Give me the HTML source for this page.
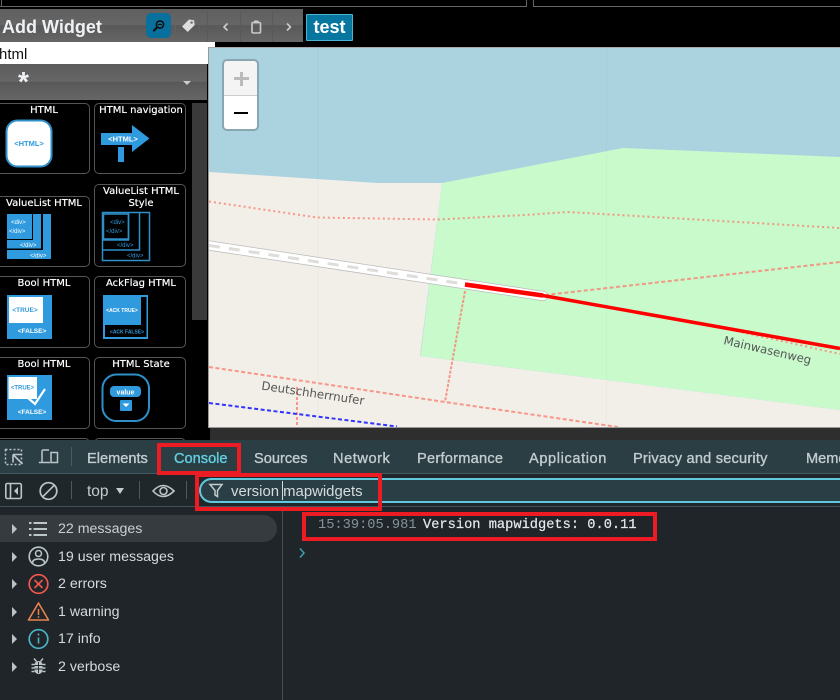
<!DOCTYPE html>
<html><head><meta charset="utf-8">
<style>
html,body{margin:0;padding:0;width:840px;height:700px;overflow:hidden;background:#000}
body{position:relative;font-family:"Liberation Sans",sans-serif}
.a{position:absolute}
.t{position:absolute;white-space:nowrap}
.tile{position:absolute;border:1px solid #555;border-radius:5px;box-sizing:border-box;background:#000}
.tl{position:absolute;color:#fff;font:10px/12px "DejaVu Sans",sans-serif;text-align:center;white-space:nowrap;text-shadow:0 0 .5px #fff}
.tab{position:absolute;top:451px;font-size:14.6px;line-height:17px;color:#c3cccf;white-space:nowrap;-webkit-text-stroke:.35px #c3cccf}
.row{position:absolute;left:58px;font-size:14.2px;line-height:17px;color:#d6dbdd;white-space:nowrap}
.arr{position:absolute;left:12px;width:0;height:0;border-left:5px solid #bcc3c6;border-top:5px solid transparent;border-bottom:5px solid transparent}
.red{position:absolute;border:4px solid #ed1c24;box-sizing:border-box}
</style></head><body>

<!-- top strip -->
<div class="a" style="left:0;top:6px;width:527px;height:1px;background:#666"></div>
<div class="a" style="left:533px;top:6px;width:307px;height:1px;background:#666"></div>
<div class="a" style="left:1px;top:0;width:1px;height:6px;background:#666"></div>
<div class="a" style="left:526px;top:0;width:1px;height:6px;background:#666"></div>
<div class="a" style="left:533px;top:0;width:1px;height:6px;background:#666"></div>

<!-- toolbar -->
<div class="a" style="left:0;top:9px;width:303px;height:33px;background:linear-gradient(#5f5f5f,#666 48%,#585858 50%,#666)"></div>
<div class="t" style="left:2px;top:16px;font:bold 18px/22px 'Liberation Sans',sans-serif;color:#eef2f5">Add Widget</div>
<div class="a" style="left:146px;top:13px;width:25px;height:25px;background:#08709c;border-radius:5px"></div>
<svg class="a" style="left:146px;top:13px" width="25" height="25" viewBox="0 0 25 25"><circle cx="14" cy="11.500" r="3.600" fill="none" stroke="#111" stroke-width="1.600"/><path d="M12 11.500h4" stroke="#111" stroke-width="1.100"/><path d="M11 14.500l-3 3" stroke="#111" stroke-width="2.200" stroke-linecap="round"/></svg>
<div class="a" style="left:175px;top:13px;width:25px;height:25px;border:1px solid #626262;box-sizing:border-box;border-radius:5px"></div>
<svg class="a" style="left:175px;top:13px" width="25" height="25" viewBox="0 0 25 25"><path d="M7 13.500l7-7 5 .8.700 4.700-7 7z" fill="#ddd"/><circle cx="16.600" cy="9.600" r="1.200" fill="#666"/></svg>
<div class="a" style="left:207px;top:10px;width:1px;height:32px;background:#5a5a5a"></div>
<div class="a" style="left:240px;top:10px;width:1px;height:32px;background:#5a5a5a"></div>
<div class="a" style="left:272px;top:10px;width:1px;height:32px;background:#5a5a5a"></div>
<svg class="a" style="left:215px;top:15px" width="85" height="24" viewBox="0 0 85 24"><path d="M12.500 8.500l-3.500 3.500 3.500 3.500" fill="none" stroke="#ccc" stroke-width="1.600"/><path d="M72 8.500l3.500 3.500-3.500 3.500" fill="none" stroke="#ccc" stroke-width="1.600"/><rect x="37" y="7.500" width="8.500" height="10.500" rx="1.200" fill="none" stroke="#ccc" stroke-width="1.600"/><rect x="39" y="5.500" width="4.500" height="2.800" fill="#ccc"/></svg>

<!-- test button -->
<div class="a" style="left:306px;top:14px;width:47px;height:27px;box-sizing:border-box;background:#07779f;border:1px solid #4fb3d4;border-radius:1px;color:#fff;font:bold 18px/24px 'Liberation Sans',sans-serif;text-align:center">test</div>

<!-- search input -->
<div class="a" style="left:0;top:42px;width:215px;height:22px;background:#fff"></div>
<div class="t" style="left:-1px;top:46px;font-size:15px;line-height:18px;color:#111">html</div>

<!-- dropdown -->
<div class="a" style="left:0;top:64px;width:207px;height:36px;background:linear-gradient(#5c5c5c,#666 48%,#585858 50%,#666)"></div>
<div class="t" style="left:18px;top:68px;font:bold 28px/28px 'Liberation Sans',sans-serif;color:#eef2f5">*</div>
<div class="a" style="left:183px;top:81px;width:0;height:0;border-top:4px solid #ccc;border-left:4.500px solid transparent;border-right:4.500px solid transparent"></div>

<!-- scrollbar -->
<div class="a" style="left:192px;top:103px;width:15px;height:217px;background:#3a3a3a"></div>

<!-- tiles -->
<div class="tile" style="left:-10px;top:103px;width:100px;height:71px"></div>
<div class="tile" style="left:94px;top:103px;width:92px;height:71px"></div>
<div class="tile" style="left:-10px;top:196px;width:100px;height:71px"></div>
<div class="tile" style="left:94px;top:184px;width:92px;height:83px"></div>
<div class="tile" style="left:-10px;top:276px;width:100px;height:72px"></div>
<div class="tile" style="left:94px;top:276px;width:92px;height:72px"></div>
<div class="tile" style="left:-10px;top:357px;width:100px;height:72px"></div>
<div class="tile" style="left:94px;top:357px;width:92px;height:72px"></div>
<div class="tile" style="left:-10px;top:438px;width:100px;height:20px"></div>
<div class="tile" style="left:94px;top:438px;width:92px;height:20px"></div>

<div class="tl" style="left:0;width:88px;top:105px">HTML</div>
<div class="tl" style="left:95px;width:92px;top:105px">HTML navigation</div>
<div class="tl" style="left:0;width:88px;top:198px">ValueList HTML</div>
<div class="tl" style="left:95px;width:92px;top:186px">ValueList HTML</div>
<div class="tl" style="left:95px;width:92px;top:198px">Style</div>
<div class="tl" style="left:0;width:88px;top:278px">Bool HTML</div>
<div class="tl" style="left:95px;width:92px;top:278px">AckFlag HTML</div>
<div class="tl" style="left:0;width:88px;top:359px">Bool HTML</div>
<div class="tl" style="left:95px;width:92px;top:359px">HTML State</div>

<svg class="a" style="left:0;top:100px" width="190" height="340" viewBox="0 100 190 340" font-family="'Liberation Sans',sans-serif" font-weight="bold">
  <!-- HTML -->
  <rect x="6.500" y="120.500" width="45" height="46" rx="11" fill="#fff" stroke="#2f8fc9" stroke-width="2"/>
  <text x="29" y="146" text-anchor="middle" font-size="7.500" fill="#2f9ade">&lt;HTML&gt;</text>
  <!-- nav -->
  <path d="M101 133H132V125L149.500 138.500 132 152V145H101z" fill="#2f9ade"/>
  <rect x="118" y="147" width="6" height="15" fill="#2f9ade"/>
  <text x="123" y="141.500" text-anchor="middle" font-size="7.500" fill="#fff">&lt;HTML&gt;</text>
  <!-- valuelist -->
  <rect x="7" y="214" width="25" height="25" fill="#2f9ade"/>
  <rect x="33" y="214" width="8" height="26" fill="#2f9ade"/>
  <rect x="7" y="240" width="34" height="8.500" fill="#2f9ade"/>
  <rect x="43" y="214" width="8" height="36" fill="#2f9ade"/>
  <rect x="7" y="250" width="44" height="9" fill="#2f9ade"/>
  <g font-size="6" font-weight="normal" fill="#fff">
    <text x="11" y="224">&lt;div&gt;</text><text x="9" y="233">&lt;/div&gt;</text>
    <text x="20" y="247">&lt;/div&gt;</text><text x="30" y="257.500">&lt;/div&gt;</text>
  </g>
  <!-- valuelist style -->
  <rect x="102.500" y="212.500" width="47" height="48" fill="none" stroke="#2f8fc9" stroke-width="1.500"/>
  <rect x="103.500" y="214" width="25" height="25" fill="none" stroke="#2f8fc9" stroke-width="1.500"/>
  <path d="M128.500 213V240H103M139.500 213V250H103" fill="none" stroke="#2f8fc9" stroke-width="1.500"/>
  <g font-size="6" font-weight="normal" fill="#2f9ade">
    <text x="110" y="224">&lt;div&gt;</text><text x="106" y="233">&lt;/div&gt;</text>
    <text x="117" y="247">&lt;/div&gt;</text><text x="127" y="257.500">&lt;/div&gt;</text>
  </g>
  <!-- bool -->
  <rect x="7" y="295" width="45" height="44" fill="#2f9ade"/>
  <rect x="9" y="297" width="34" height="26" fill="#fff"/>
  <text x="25" y="312" text-anchor="middle" font-size="6.500" fill="#2f9ade">&lt;TRUE&gt;</text>
  <text x="32" y="333" text-anchor="middle" font-size="6.500" fill="#fff">&lt;FALSE&gt;</text>
  <!-- ackflag -->
  <rect x="103" y="295" width="45" height="44" fill="#2f9ade"/>
  <rect x="141" y="297" width="5.500" height="28" fill="#000"/>
  <rect x="105" y="325" width="41.500" height="12" fill="#000"/>
  <text x="122" y="312" text-anchor="middle" font-size="5" fill="#fff">&lt;ACK TRUE&gt;</text>
  <text x="127" y="333.500" text-anchor="middle" font-size="5" fill="#2f9ade">&lt;ACK FALSE&gt;</text>
  <!-- bool 2 -->
  <rect x="7" y="375" width="45" height="45" fill="#2f9ade"/>
  <rect x="8.500" y="377" width="28.500" height="22" fill="#fff"/>
  <text x="22.500" y="389.500" text-anchor="middle" font-size="6" fill="#2f9ade">&lt;TRUE&gt;</text>
  <path d="M28 398l7 6 10-15" fill="none" stroke="#fff" stroke-width="2.200"/>
  <text x="32" y="414" text-anchor="middle" font-size="6.500" fill="#fff">&lt;FALSE&gt;</text>
  <!-- state -->
  <rect x="102.500" y="374.500" width="46.500" height="46.500" rx="14" fill="none" stroke="#2f8fc9" stroke-width="2"/>
  <rect x="110" y="386" width="31" height="11" rx="4" fill="#2f9ade"/>
  <text x="125.500" y="394.500" text-anchor="middle" font-size="7" fill="#fff">value</text>
  <rect x="120" y="400" width="12" height="11" rx="1" fill="#2f9ade"/>
  <path d="M122.500 403.500h7l-3.500 3.500z" fill="#fff"/>
</svg>

<!-- map -->
<svg class="a" style="left:209px;top:47px;background:#aad3df" width="631" height="381" viewBox="209 47 631 381">
  <rect x="209" y="47" width="631" height="381" fill="#aad3df"/>
  <path d="M209 172L317 179 377 183 442 183 420 356 840 410V428H209z" fill="#f2efe9"/>
  <path d="M442 183L623 148 840 157V410L420.500 356z" fill="#c8facc"/>
  <path d="M318 47V428M606.500 47V428" stroke="#000" stroke-opacity=".025" stroke-width="1"/>
  <g style="filter:blur(.35px)">
  <!-- paths -->
  <g fill="none" stroke="#fa8072" stroke-opacity=".8">
    <path d="M209 201.500L317 217.500 437 219.500 525 215 568 212 840 228" stroke-width="2" stroke-dasharray="2 3"/>
    <path d="M545 295L840 262" stroke-width="2" stroke-dasharray="4 2.500"/>
    <path d="M732 330L840 354" stroke-width="2" stroke-dasharray="2 3"/>
    <path d="M209 367L445 402 525 413.500 618 427" stroke-width="2" stroke-dasharray="4 2.500"/>
    <path d="M465 291L453 357 445 402" stroke-width="2" stroke-dasharray="3 1.500"/>
    <path d="M297 387V428" stroke-width="2" stroke-dasharray="3 2"/>
  </g>
  <path d="M209 403L397 426.500" fill="none" stroke="#3333ff" stroke-width="2" stroke-dasharray="4 2.500"/>
  <!-- road -->
  <path d="M209 245.500L543 296" fill="none" stroke="#bbb" stroke-width="10" stroke-linecap="round"/>
  <path d="M209 245.500L543 296" fill="none" stroke="#fff" stroke-width="8.500" stroke-linecap="round"/>
  <path d="M209 245.500L465 284.200" fill="none" stroke="#dfddd9" stroke-width="3" stroke-dasharray="11 9"/>
  <path d="M465 284.500L543 295.500" fill="none" stroke="#f00" stroke-width="4.500"/>
  <path d="M540 295L840 348.500" fill="none" stroke="#f00" stroke-width="3.500"/>
  <text transform="translate(261,389.500) rotate(8.500)" font-family="'DejaVu Sans',sans-serif" font-size="11.800" fill="#555">Deutschherrnufer</text>
  <text transform="translate(723,344) rotate(13)" font-family="'DejaVu Sans',sans-serif" font-size="11.700" fill="#555">Mainwasenweg</text>
  </g>
</svg>
<div class="a" style="left:209px;top:47px;width:631px;height:1px;background:#aaa"></div>
<div class="a" style="left:208px;top:47px;width:1px;height:381px;background:#999"></div>
<div class="a" style="left:209px;top:427px;width:631px;height:1px;background:#999"></div>
<div class="a" style="left:209px;top:428px;width:631px;height:12px;background:#2e2e2e"></div>
<div class="a" style="left:208px;top:428px;width:2px;height:12px;background:#000"></div>

<!-- zoom -->
<div class="a" style="left:222px;top:59px;width:37px;height:72px;background:#8aa6b0;border-radius:5px"></div>
<div class="a" style="left:224px;top:61px;width:33px;height:34px;background:#f4f4f4;border-radius:3px 3px 0 0"></div>
<div class="a" style="left:224px;top:95px;width:33px;height:1px;background:#ccc"></div>
<div class="a" style="left:224px;top:96px;width:33px;height:33px;background:#fff;border-radius:0 0 3px 3px"></div>
<div class="a" style="left:233.500px;top:77px;width:15px;height:2.500px;background:#bbb"></div>
<div class="a" style="left:239.500px;top:71.500px;width:3px;height:14px;background:#bbb"></div>
<div class="a" style="left:233.500px;top:112px;width:14.500px;height:2px;background:#000"></div>

<!-- devtools -->
<div class="a" style="left:0;top:440px;width:840px;height:33px;background:#2a3e44"></div>
<div class="a" style="left:0;top:473px;width:840px;height:1px;background:#445a62"></div>
<div class="a" style="left:0;top:474px;width:840px;height:32px;background:#20272b"></div>
<div class="a" style="left:0;top:506px;width:840px;height:1px;background:#3f5159"></div>
<div class="a" style="left:0;top:507px;width:840px;height:193px;background:#202529"></div>
<div class="a" style="left:282px;top:507px;width:1px;height:193px;background:#3f5159"></div>

<svg class="a" style="left:0;top:440px" width="80" height="33" viewBox="0 0 80 33" fill="none" stroke="#bcc5c8">
  <rect x="5.500" y="9.500" width="16" height="15" stroke-width="1.500" stroke-dasharray="2 2"/>
  <path d="M13 14.500h8.500M13 14.500v8M13.500 15l9 9" stroke-width="1.600" stroke="#bcc5c8"/>
  <path d="M49 10H43.500Q42 10 42 11.500V22M38.800 22.500H50" stroke-width="1.500"/>
  <rect x="51" y="12.500" width="6.500" height="10" stroke-width="1.500"/>
</svg>
<div class="a" style="left:71px;top:447px;width:1px;height:19px;background:#4a5c63"></div>
<div class="tab" style="left:87px">Elements</div>
<div class="tab" style="left:174px;color:#63cfe2;-webkit-text-stroke:.35px #63cfe2">Console</div>
<div class="tab" style="left:254px">Sources</div>
<div class="tab" style="left:333px;letter-spacing:.55px">Network</div>
<div class="tab" style="left:417px;letter-spacing:.25px">Performance</div>
<div class="tab" style="left:529px;letter-spacing:.6px">Application</div>
<div class="tab" style="left:633px;letter-spacing:.2px">Privacy and security</div>
<div class="tab" style="left:806px">Memory</div>

<!-- toolbar 2 -->
<svg class="a" style="left:0;top:474px" width="190" height="32" viewBox="0 0 190 32" fill="none" stroke="#bcc5c8">
  <rect x="5.800" y="9.500" width="15.500" height="15" rx="1.500" stroke-width="1.600"/>
  <path d="M10.500 9.500v15" stroke-width="1.600"/>
  <path d="M18 13v8l-4-4z" fill="#bcc5c8" stroke="none"/>
  <circle cx="48.500" cy="17" r="8.300" stroke-width="1.700"/>
  <path d="M42.700 22.800L54.300 11.200" stroke-width="1.700"/>
  <path d="M153 17q10-11 21 0q-11 11-21 0z" stroke-width="1.600"/>
  <circle cx="163.500" cy="17" r="3.500" stroke-width="1.600"/>
</svg>
<div class="a" style="left:71px;top:481px;width:1px;height:18px;background:#4a5c63"></div>
<div class="t" style="left:87px;top:483px;font-size:15.500px;line-height:17px;color:#c3cccf">top</div>
<div class="a" style="left:116px;top:488px;width:0;height:0;border-top:6px solid #c3cccf;border-left:4.500px solid transparent;border-right:4.500px solid transparent"></div>
<div class="a" style="left:139px;top:481px;width:1px;height:18px;background:#4a5c63"></div>
<div class="a" style="left:186px;top:481px;width:1px;height:18px;background:#4a5c63"></div>

<div class="a" style="left:199px;top:478px;width:700px;height:25px;box-sizing:border-box;border:2px solid #60c8dc;border-radius:13px;background:#2a3f45"></div>
<svg class="a" style="left:208px;top:482px" width="16" height="17" viewBox="0 0 16 17" fill="none" stroke="#c3cccf" stroke-width="1.500"><path d="M2 2.500H14L9.500 8.500V14.500L7 13V8.500z"/></svg>
<div class="t" style="left:231px;top:483px;font-size:14.900px;line-height:18px;color:#d6dbdd">version mapwidgets</div>
<div class="a" style="left:282px;top:481px;width:1px;height:19px;background:#d6dbdd"></div>

<!-- console msg -->
<div class="t" style="left:318px;top:518px;font:13.700px/16px 'Liberation Mono',monospace;color:#84949a">15:39:05.981</div>
<div class="t" style="left:423px;top:518px;font:13.700px/16px 'Liberation Mono',monospace;color:#e4eaec;-webkit-text-stroke:.2px #e4eaec">Version mapwidgets: 0.0.11</div>
<svg class="a" style="left:297px;top:547px" width="10" height="12" viewBox="0 0 10 12" fill="none" stroke="#3f9fb0" stroke-width="1.500"><path d="M3 1.500L7 6 3 10.500"/></svg>

<!-- sidebar -->
<div class="a" style="left:0;top:515px;width:277px;height:27px;background:#363b3f;border-radius:0 14px 14px 0"></div>
<div class="arr" style="top:524px"></div>
<div class="arr" style="top:552px"></div>
<div class="arr" style="top:579px"></div>
<div class="arr" style="top:607px"></div>
<div class="arr" style="top:634px"></div>
<div class="arr" style="top:662px"></div>
<div class="row" style="top:521px;color:#c9cfd2">22 messages</div>
<div class="row" style="top:549px">19 user messages</div>
<div class="row" style="top:576px">2 errors</div>
<div class="row" style="top:604px">1 warning</div>
<div class="row" style="top:631px">17 info</div>
<div class="row" style="top:659px">2 verbose</div>

<svg class="a" style="left:26px;top:515px" width="26" height="170" viewBox="26 515 26 170" fill="none">
  <path d="M33.500 523h13.500M33.500 529h13.500M33.500 535h13.500" stroke="#bcc5c8" stroke-width="2"/>
  <path d="M29 523h2.500M29 529h2.500M29 535h2.500" stroke="#bcc5c8" stroke-width="2"/>
  <circle cx="38.500" cy="556.500" r="9.300" stroke="#bcc5c8" stroke-width="1.600"/>
  <circle cx="38.500" cy="553.500" r="3" stroke="#bcc5c8" stroke-width="1.500"/>
  <path d="M32.500 563q0-4 6-4t6 4" stroke="#bcc5c8" stroke-width="1.500"/>
  <circle cx="38.500" cy="584" r="9.300" stroke="#f2574b" stroke-width="1.700"/>
  <path d="M34.500 580l8 8M42.500 580l-8 8" stroke="#f2574b" stroke-width="1.600"/>
  <path d="M38.500 603L48.500 620H28.500z" stroke="#e8834f" stroke-width="1.600" stroke-linejoin="round"/>
  <path d="M38.500 609v6" stroke="#e8834f" stroke-width="1.500"/><circle cx="38.500" cy="617" r=".9" fill="#e8834f"/>
  <circle cx="38.500" cy="639" r="9.300" stroke="#49b3c8" stroke-width="1.700"/>
  <path d="M38.500 637.500v6" stroke="#49b3c8" stroke-width="1.600"/><circle cx="38.500" cy="634.500" r="1" fill="#49b3c8"/>
  <path d="M34 658.500l2.500 3M43 658.500l-2.500 3M31.500 664.500h3M31.500 668h3M31.500 671.500h3M42.500 664.500h3M42.500 668h3M42.500 671.500h3" stroke="#bcc5c8" stroke-width="1.400"/>
  <rect x="34.500" y="661" width="8" height="13" rx="4" fill="#bcc5c8"/>
  <path d="M34.500 665.500h8M34.500 669h8M38.500 662v11" stroke="#202529" stroke-width=".9"/>
</svg>

<!-- red boxes -->
<div class="red" style="left:157px;top:443px;width:84px;height:32px"></div>
<div class="red" style="left:195px;top:473px;width:187px;height:38px"></div>
<div class="red" style="left:302px;top:512px;width:355px;height:29px"></div>

</body></html>
